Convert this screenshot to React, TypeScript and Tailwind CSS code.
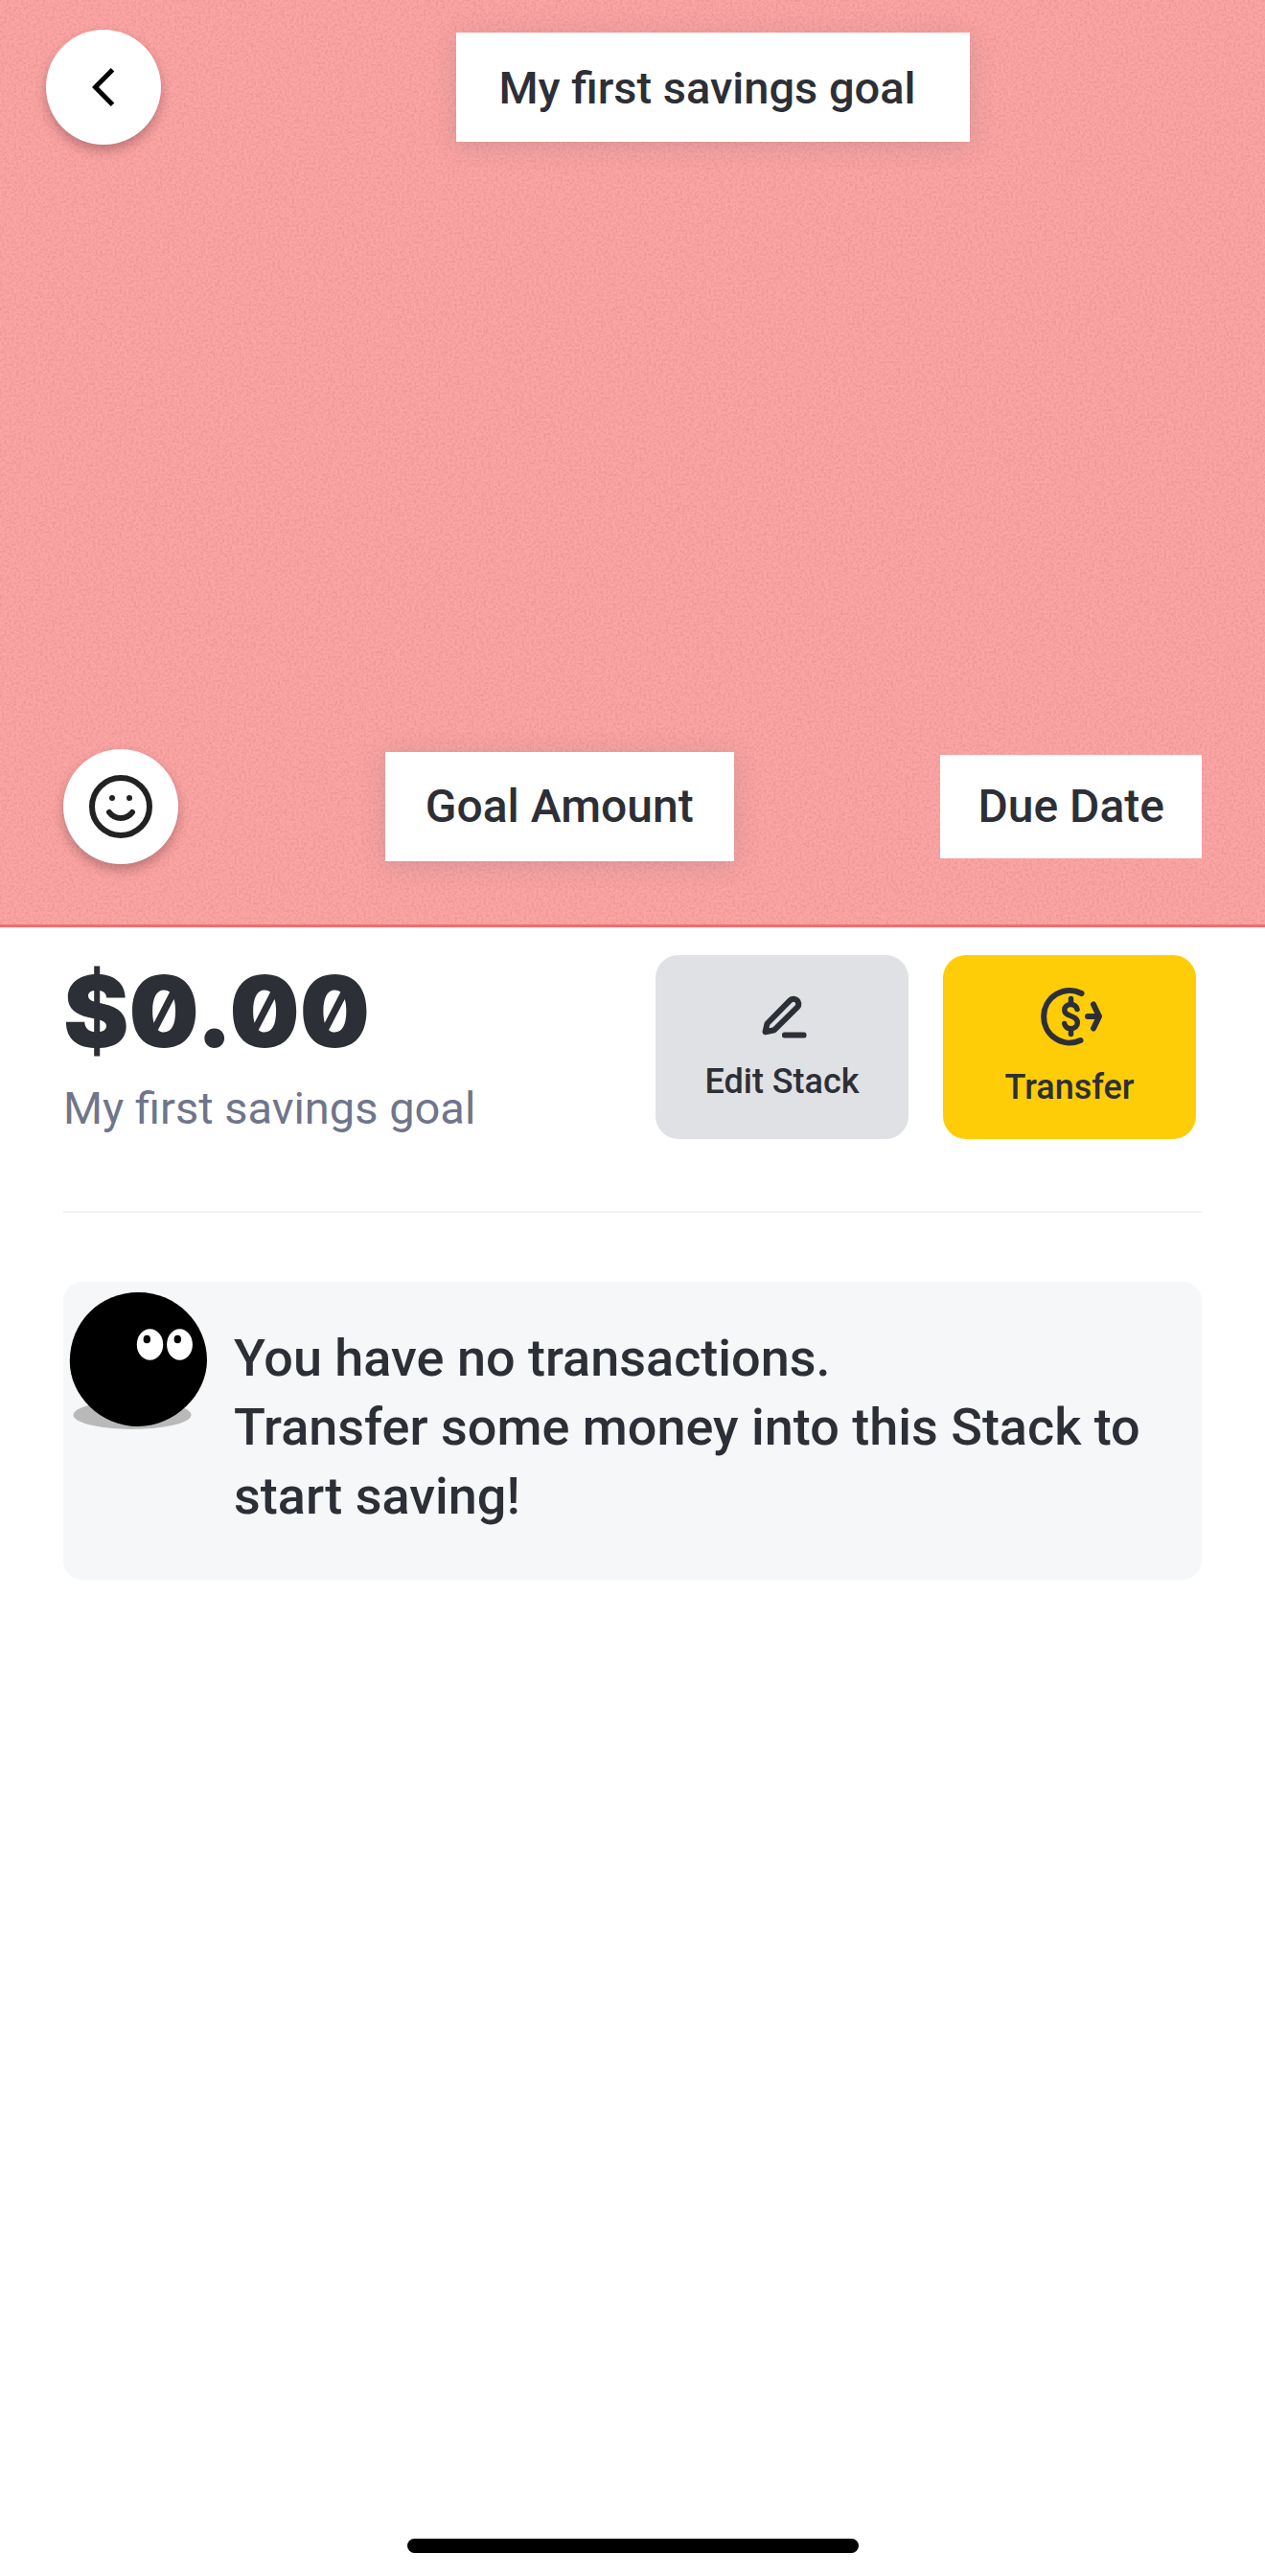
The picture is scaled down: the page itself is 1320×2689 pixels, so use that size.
interface IconProps {
  className?: string;
}

function ChevronIcon({ className }: IconProps) {
  return (
    <svg viewBox="0 0 24 40" fill="none" className={className} aria-hidden="true">
      <path d="M21.5 1.8 3.5 20l18 18.200" stroke="currentColor" strokeWidth="5" />
    </svg>
  );
}

function SmileIcon({ className }: IconProps) {
  return (
    <svg viewBox="0 0 24 24" fill="none" className={className} aria-hidden="true">
      <circle cx="12" cy="12" r="10" stroke="currentColor" strokeWidth="2" />
      <circle cx="9" cy="9" r="1" fill="currentColor" />
      <circle cx="15" cy="9" r="1" fill="currentColor" />
      <path
        d="M8 14c1 1.300 2.500 2 4 2s3-.7 4-2"
        stroke="currentColor"
        strokeWidth="2"
        strokeLinecap="round"
      />
    </svg>
  );
}

function PencilIcon({ className }: IconProps) {
  return (
    <svg viewBox="-2 0 56 52" fill="none" className={className} aria-hidden="true">
      <g stroke="currentColor" strokeWidth="6" strokeLinejoin="round">
        <path d="M8.500 42.200 10.500 33.500 34.500 9.200c4.600-4.600 12 2.400 7.500 7.200L18 40.200Z" />
      </g>
      <rect x="26" y="42.500" width="25.500" height="6" rx="2.500" fill="currentColor" />
    </svg>
  );
}

function TransferIcon({ className }: IconProps) {
  return (
    <svg viewBox="-3 0 68 64" fill="none" className={className} aria-hidden="true">
      <g stroke="currentColor" strokeWidth="6" strokeLinecap="round" strokeLinejoin="round">
        <path d="M43.500 8A27 27.300 0 1 0 42.500 57" />
        <path d="M50 32h12M56 19.500 62 32l-6 12.500" />
        <path
          d="M32.500 13.500v5M32.500 45.500v5M39 24.500c-1-3.500-3.500-5-6.500-5-4 0-6.700 2.500-6.700 5.700 0 7.800 13.500 4.800 13.500 13.300 0 3.700-3 6.200-6.800 6.200-3.300 0-6-1.700-6.800-5.200"
          strokeWidth="5.500"
        />
      </g>
    </svg>
  );
}

function BlobMascot({ className }: IconProps) {
  return (
    <svg viewBox="0 0 150 150" className={className} aria-hidden="true">
      <ellipse cx="68" cy="132" rx="61.500" ry="15" fill="#b9b9b9" />
      <path
        d="M74.500 4C114 4 146 36 146 75c0 36-34 69-72 69C35 144 2.800 112 2.800 76 2.800 35 34 4 74.500 4Z"
        fill="#000"
      />
      <ellipse cx="86.500" cy="58.500" rx="13.700" ry="16.300" fill="#fff" />
      <ellipse cx="117.500" cy="58.500" rx="13.400" ry="16.300" fill="#fff" />
      <ellipse cx="83.300" cy="53" rx="3.700" ry="4.300" fill="#000" />
      <ellipse cx="115.300" cy="53" rx="3.700" ry="4.300" fill="#000" />
    </svg>
  );
}

/* Paper grain over the cover colour */
function PaperGrain() {
  return (
    <svg className="pointer-events-none absolute inset-0 h-full w-full opacity-20" aria-hidden="true">
      <filter id="grain" x="0" y="0" width="100%" height="100%" colorInterpolationFilters="sRGB">
        <feTurbulence type="fractalNoise" baseFrequency="0.4" numOctaves="3" seed="4" />
        <feColorMatrix values="0 0 0 0 0.75  0 0 0 0 0.4  0 0 0 0 0.42  3 0 0 0 -1.2" />
      </filter>
      <rect width="100%" height="100%" filter="url(#grain)" />
    </svg>
  );
}

const ROUND_BUTTON =
  "flex size-[120px] shrink-0 items-center justify-center rounded-full bg-white shadow-[0_6px_12px_rgba(60,20,30,0.3)]";

const ACTION_BUTTON =
  "flex h-48 w-[264px] flex-col items-center justify-center gap-5 rounded-3xl text-[36px] leading-[44px] font-medium";

export default function App() {
  return (
    <div className="flex min-h-screen flex-col bg-white font-['Roboto',sans-serif] text-[#2d2f36]">
      {/* Cover */}
      <header className="relative flex min-h-[968px] flex-col justify-between border-b-3 border-[#f56c6e] bg-[#fba5a4] pt-[31px] pb-[63px]">
        <PaperGrain />
        <div className="relative flex items-center pl-12">
          <button type="button" aria-label="Back" className={`${ROUND_BUTTON} text-black`}>
            <ChevronIcon className="h-10 w-6" />
          </button>
          <div className="flex flex-1 justify-center">
            <h1 className="bg-white pt-[29px] pr-14 pb-[27px] pl-11 text-[47px] leading-[58px] font-medium shadow-[0_4px_24px_rgba(90,90,110,0.2)]">
              My first savings goal
            </h1>
          </div>
        </div>

        <div className="relative flex items-center justify-between px-[66px]">
          <button type="button" aria-label="Choose emoji" className={`${ROUND_BUTTON} text-[#222]`}>
            <SmileIcon className="size-[72px]" />
          </button>
          <button
            type="button"
            className="bg-white px-[42px] py-7 text-[48px] leading-[58px] font-medium shadow-[0_4px_24px_rgba(90,90,110,0.2)]"
          >
            Goal Amount
          </button>
          <button type="button" className="bg-white px-[39px] py-[25px] text-[48px] leading-[58px] font-medium">
            Due Date
          </button>
        </div>
      </header>

      <main className="px-[66px] pt-[29px]">
        {/* Balance and actions */}
        <section className="flex items-start justify-between border-b-2 border-[#f3f3f4] pr-[6px] pb-[75px]">
          <div>
            <p className="font-['Inter',sans-serif] text-[103px] leading-[118px] font-black slashed-zero">
              $0.00
            </p>
            <p className="mt-[14px] text-[47px] leading-[56px] text-[#70758a]">My first savings goal</p>
          </div>
          <div className="flex gap-9">
            <button type="button" className={`${ACTION_BUTTON} bg-[#e0e1e5]`}>
              <PencilIcon className="h-[52px] w-14" />
              Edit Stack
            </button>
            <button type="button" className={`${ACTION_BUTTON} bg-[#fecd08]`}>
              <TransferIcon className="h-16 w-[68px]" />
              Transfer
            </button>
          </div>
        </section>

        {/* Empty state */}
        <section className="mt-[72px] flex items-start gap-6 rounded-[20px] bg-[#f6f7f9] pr-12 pl-1">
          <BlobMascot className="mt-[7px] size-[150px] shrink-0" />
          <p className="pt-11 pb-[51px] text-[54px] leading-[72px] font-medium">
            You have no transactions.
            <br />
            Transfer some money into this Stack to start saving!
          </p>
        </section>
      </main>

      {/* Home indicator */}
      <div className="mx-auto mt-auto mb-6 h-[15px] w-[471px] rounded-full bg-black" />
    </div>
  );
}
